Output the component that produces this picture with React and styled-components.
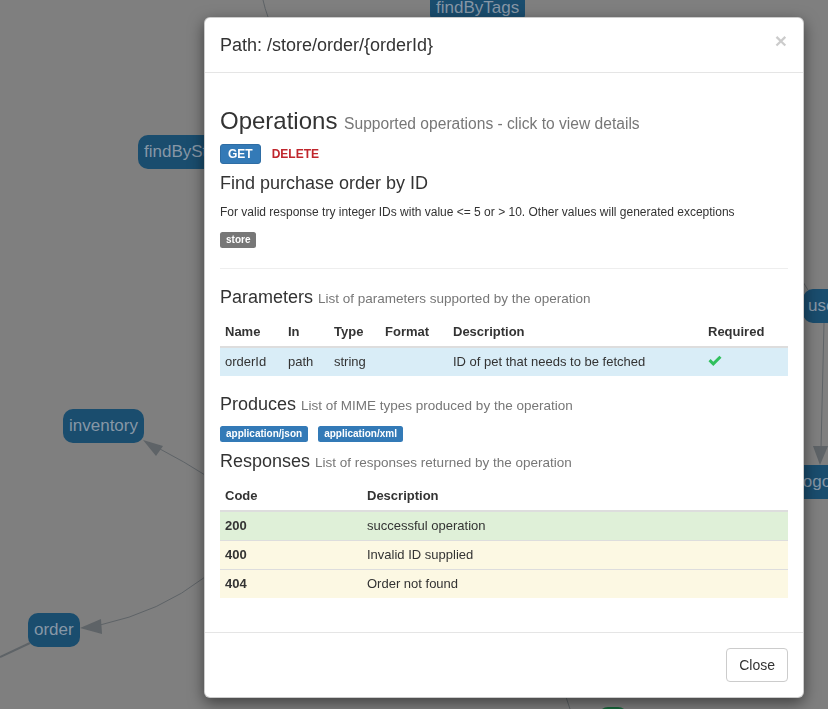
import React from "react";
import styled, { createGlobalStyle } from "styled-components";

const Global = createGlobalStyle`
  html, body { margin: 0; padding: 0; }
  body {
    background: #7f7f7f;
    font-family: "Liberation Sans", Arial, Helvetica, sans-serif;
    font-size: 13px;
    line-height: 1.42857;
    color: #333;
    overflow: hidden;
  }
  * { box-sizing: border-box; }
`;

const Canvas = styled.div`
  position: relative;
  width: 828px;
  height: 709px;
  overflow: hidden;
`;

const Edges = styled.svg`
  position: absolute;
  left: 0;
  top: 0;
`;

const Node = styled.div`
  position: absolute;
  height: 34px;
  line-height: 34px;
  padding: 0 6px;
  border-radius: 10px;
  background: ${(p) => p.$bg || "#1a4d6e"};
  color: #8797a6;
  font-size: 17px;
  white-space: nowrap;
`;

const Overlay = styled.div`
  position: fixed;
  inset: 0;
  padding: 17px 0 0 204px;
  z-index: 10;
`;

const Modal = styled.div`
  width: 600px;
  background: #fff;
  border: 1px solid rgba(0, 0, 0, 0.2);
  border-radius: 6px;
  box-shadow: 0 5px 15px rgba(0, 0, 0, 0.5);
`;

const Header = styled.div`
  display: flex;
  align-items: flex-start;
  justify-content: space-between;
  padding: 15px;
  border-bottom: 1px solid #e5e5e5;
`;

const Title = styled.h4`
  margin: 0;
  font-size: 18px;
  font-weight: 500;
  line-height: 24px;
  color: #333;
`;

const CloseX = styled.button`
  border: 0;
  background: transparent;
  padding: 0;
  margin-top: -3px;
  margin-right: 1px;
  font-family: "Liberation Sans", Arial, sans-serif;
  font-size: 21px;
  font-weight: bold;
  line-height: 1;
  color: #000;
  opacity: 0.2;
  cursor: pointer;
`;

const Body = styled.div`
  padding: 15px;
  display: flow-root;
`;

const H3 = styled.h3`
  margin: 20px 0 10px;
  font-size: 24px;
  font-weight: 500;
  line-height: 1.1;
  color: #333;
  small {
    font-size: 65%;
    font-weight: 400;
    color: #777;
  }
`;

const H4 = styled.h4`
  margin: 10px 0 10px;
  font-size: 18px;
  font-weight: 500;
  line-height: 1.1;
  color: #333;
  small {
    font-size: 75%;
    font-weight: 400;
    color: #777;
  }
`;

const OpBar = styled.div`
  display: flex;
  align-items: center;
  gap: 10px;
`;

const OpButton = styled.button`
  font-family: "Liberation Sans", Arial, sans-serif;
  font-size: 12px;
  font-weight: bold;
  line-height: 16px;
  padding: 1px ${(p) => (p.$active ? "7px" : "0")};
  border-radius: 3px;
  border: 1px solid ${(p) => (p.$active ? "#2e6da4" : "transparent")};
  background: ${(p) => (p.$active ? "#337ab7" : "transparent")};
  color: ${(p) => (p.$active ? "#fff" : "#c0262d")};
  cursor: pointer;
`;

const Desc = styled.p`
  margin: 0 0 10px;
  font-size: 12px;
  line-height: 17px;
  color: #333;
`;

const LabelRow = styled.div`
  display: flex;
  gap: 10px;
  line-height: 18px;
`;

const Label = styled.span`
  display: inline-block;
  padding: 3px 6px 3px;
  font-size: 10px;
  font-weight: bold;
  line-height: 10px;
  color: #fff;
  white-space: nowrap;
  border-radius: 2.5px;
  background: ${(p) => (p.$kind === "primary" ? "#337ab7" : "#777")};
  margin-top: 1px;
`;

const Hr = styled.hr`
  margin: 20px 0 19px;
  border: 0;
  border-top: 1px solid #eee;
`;

const Table = styled.table`
  width: 100%;
  border-collapse: collapse;
  margin-bottom: 19px;
  font-size: 13px;
  table-layout: fixed;
  th {
    text-align: left;
    font-weight: bold;
    padding: 5px;
    line-height: 18px;
    border-bottom: 2px solid #ddd;
    vertical-align: bottom;
  }
  td {
    padding: 5px;
    line-height: 18px;
    border-top: 1px solid #ddd;
  }
`;

const Row = styled.tr`
  background: ${(p) =>
    p.$variant === "info"
      ? "#d9edf7"
      : p.$variant === "success"
      ? "#dff0d8"
      : p.$variant === "warning"
      ? "#fcf8e3"
      : "transparent"};
`;

const CodeCell = styled.td`
  font-weight: bold;
`;

const Footer = styled.div`
  display: flex;
  justify-content: flex-end;
  padding: 15px;
  border-top: 1px solid #e5e5e5;
`;

const FooterButton = styled.button`
  font-family: "Liberation Sans", Arial, sans-serif;
  font-size: 14px;
  line-height: 20px;
  padding: 6px 12px;
  color: #333;
  background: #fff;
  border: 1px solid #ccc;
  border-radius: 4px;
  cursor: pointer;
`;

const Check = () => (
  <svg width="14" height="12" viewBox="0 0 14 12" style={{ display: "block", marginTop: -1 }}>
    <path d="M0.5 6.2 L2.6 4.1 L5.3 6.8 L11.4 0.7 L13.5 2.8 L5.3 11 Z" fill="#30c05c" />
  </svg>
);

const params = [
  { name: "orderId", in: "path", type: "string", format: "", desc: "ID of pet that needs to be fetched", required: true },
];

const responses = [
  { code: "200", desc: "successful operation", variant: "success" },
  { code: "400", desc: "Invalid ID supplied", variant: "warning" },
  { code: "404", desc: "Order not found", variant: "warning" },
];

export default function App() {
  return (
    <>
      <Global />
      <Canvas>
        <Edges width="828" height="709">
          <g stroke="#5e6367" fill="none" strokeWidth="1">
            <path d="M263 0 Q265 9 268 17" />
            <path d="M205 475 Q185 462 160 449" />
            <path d="M205 577 Q160 612 100 625" />
            <path d="M0 657 L30 643" strokeWidth="2" />
            <path d="M803 282 L808 290" />
            <path d="M824 323 L821 448" />
            <path d="M566 697 L570 709" />
          </g>
          <g fill="#5e6367">
            <polygon points="143,440 163,446 156,456" />
            <polygon points="80,628 101,619 102,634" />
            <polygon points="820,465 813,446 828,446" />
          </g>
        </Edges>
        <Node style={{ left: 430, top: -9 }}>findByTags</Node>
        <Node style={{ left: 138, top: 135 }}>findByStatus</Node>
        <Node style={{ left: 63, top: 409 }}>inventory</Node>
        <Node style={{ left: 28, top: 613 }}>order</Node>
        <Node style={{ left: 803, top: 289, paddingLeft: 5 }}>user</Node>
        <Node style={{ left: 793, top: 465 }}>logout</Node>
        <Node $bg="#17663a" style={{ left: 598, top: 707, width: 30 }} />
      </Canvas>
      <Overlay>
        <Modal>
          <Header>
            <Title>Path: /store/order/{"{orderId}"}</Title>
            <CloseX>×</CloseX>
          </Header>
          <Body>
            <H3>
              Operations <small>Supported operations - click to view details</small>
            </H3>
            <OpBar>
              <OpButton $active>GET</OpButton>
              <OpButton>DELETE</OpButton>
            </OpBar>
            <H4>Find purchase order by ID</H4>
            <Desc>For valid response try integer IDs with value &lt;= 5 or &gt; 10. Other values will generated exceptions</Desc>
            <LabelRow>
              <Label>store</Label>
            </LabelRow>
            <Hr />
            <H4>
              Parameters <small>List of parameters supported by the operation</small>
            </H4>
            <Table>
              <colgroup>
                <col style={{ width: 63 }} />
                <col style={{ width: 46 }} />
                <col style={{ width: 51 }} />
                <col style={{ width: 68 }} />
                <col style={{ width: 255 }} />
                <col style={{ width: 85 }} />
              </colgroup>
              <thead>
                <tr>
                  <th>Name</th>
                  <th>In</th>
                  <th>Type</th>
                  <th>Format</th>
                  <th>Description</th>
                  <th>Required</th>
                </tr>
              </thead>
              <tbody>
                {params.map((p) => (
                  <Row key={p.name} $variant="info">
                    <td>{p.name}</td>
                    <td>{p.in}</td>
                    <td>{p.type}</td>
                    <td>{p.format}</td>
                    <td>{p.desc}</td>
                    <td>{p.required && <Check />}</td>
                  </Row>
                ))}
              </tbody>
            </Table>
            <H4>
              Produces <small>List of MIME types produced by the operation</small>
            </H4>
            <LabelRow>
              <Label $kind="primary">application/json</Label>
              <Label $kind="primary">application/xml</Label>
            </LabelRow>
            <H4>
              Responses <small>List of responses returned by the operation</small>
            </H4>
            <Table>
              <colgroup>
                <col style={{ width: 142 }} />
                <col />
              </colgroup>
              <thead>
                <tr>
                  <th>Code</th>
                  <th>Description</th>
                </tr>
              </thead>
              <tbody>
                {responses.map((r) => (
                  <Row key={r.code} $variant={r.variant}>
                    <CodeCell>{r.code}</CodeCell>
                    <td>{r.desc}</td>
                  </Row>
                ))}
              </tbody>
            </Table>
          </Body>
          <Footer>
            <FooterButton>Close</FooterButton>
          </Footer>
        </Modal>
      </Overlay>
    </>
  );
}
